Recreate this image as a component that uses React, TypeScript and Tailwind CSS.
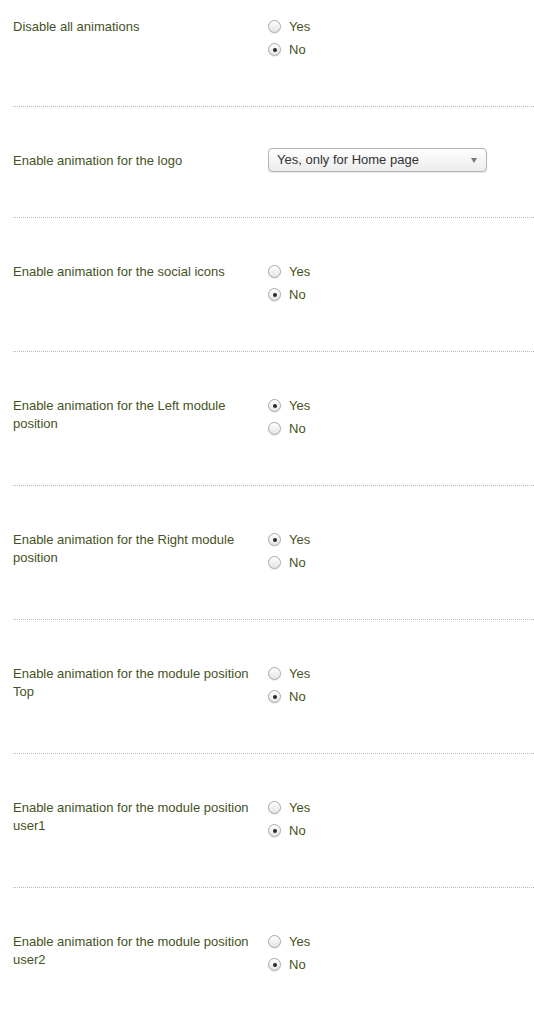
import React from "react";

type Row =
  | { label: string; kind: "radio"; value: "yes" | "no" }
  | { label: string; kind: "select"; value: string };

const rows: Row[] = [
  { label: "Disable all animations", kind: "radio", value: "no" },
  { label: "Enable animation for the logo", kind: "select", value: "Yes, only for Home page" },
  { label: "Enable animation for the social icons", kind: "radio", value: "no" },
  { label: "Enable animation for the Left module position", kind: "radio", value: "yes" },
  { label: "Enable animation for the Right module position", kind: "radio", value: "yes" },
  { label: "Enable animation for the module position Top", kind: "radio", value: "no" },
  { label: "Enable animation for the module position user1", kind: "radio", value: "no" },
  { label: "Enable animation for the module position user2", kind: "radio", value: "no" },
];

function Radio({ checked, label }: { checked: boolean; label: string }) {
  return (
    <div className="flex h-[23px] items-center">
      <span className="flex h-[13px] w-[13px] items-center justify-center rounded-full border border-[#a8a8a8] bg-gradient-to-b from-[#ffffff] to-[#e4e4e4] shadow-[0_1px_1px_rgba(0,0,0,0.08)]">
        {checked && <span className="h-[4px] w-[4px] rounded-full bg-[#2a2a2a]" />}
      </span>
      <span className="ml-[8px]">{label}</span>
    </div>
  );
}

export default function App() {
  return (
    <div className="min-h-screen bg-white pl-[13px] font-['Liberation_Sans',Arial,sans-serif] text-[13px] text-[#44521e]">
      {rows.map((row, i) => (
        <div
          key={row.label}
          className={`flex ${i === 0 ? "pt-[15px]" : "pt-[42px]"} pb-[45px] ${
            i < rows.length - 1 ? "border-b border-dotted border-[#b8b8b8]" : ""
          }`}
        >
          <div className={`w-[255px] shrink-0 pr-[6px] leading-[18px] ${row.kind === "radio" ? "mt-[3px]" : "mt-[3px]"}`}>
            {row.label}
          </div>
          {row.kind === "radio" ? (
            <div>
              <Radio checked={row.value === "yes"} label="Yes" />
              <Radio checked={row.value === "no"} label="No" />
            </div>
          ) : (
            <div className="relative -mt-px flex h-[24px] w-[219px] items-center rounded-[4px] border border-[#b3b3b3] bg-gradient-to-b from-[#ffffff] to-[#ececec] pl-[8px] text-[#333333] shadow-[0_1px_1px_rgba(0,0,0,0.1)]">
              {row.value}
              <span className="absolute right-[9px] top-[9px] h-0 w-0 border-l-[3px] border-r-[3px] border-t-[5px] border-l-transparent border-r-transparent border-t-[#777777]" />
            </div>
          )}
        </div>
      ))}
    </div>
  );
}
